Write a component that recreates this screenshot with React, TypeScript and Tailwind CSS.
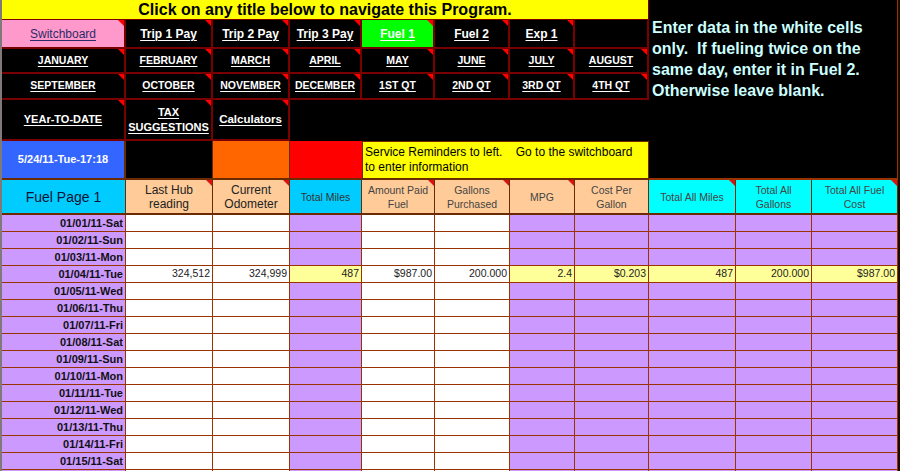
import React from "react";

type NavCell = {
  label: string;
  kind?: "pink" | "green";
  size?: string;
  tri?: boolean;
};

const row2: NavCell[] = [
  { label: "Switchboard", kind: "pink" },
  { label: "Trip 1 Pay" },
  { label: "Trip 2 Pay" },
  { label: "Trip 3 Pay" },
  { label: "Fuel 1", kind: "green" },
  { label: "Fuel 2" },
  { label: "Exp 1" },
  { label: "", tri: false },
];

const row3 = ["JANUARY", "FEBRUARY", "MARCH", "APRIL", "MAY", "JUNE", "JULY", "AUGUST"];
const row4 = ["SEPTEMBER", "OCTOBER", "NOVEMBER", "DECEMBER", "1ST QT", "2ND QT", "3RD QT", "4TH QT"];

type Head = { lines: string[]; bg: string; text: string; tri?: boolean };

const heads: Head[] = [
  { lines: ["Fuel Page 1"], bg: "bg-[#00ccff]", text: "text-[14px] text-[#111133]" },
  { lines: ["Last Hub", "reading"], bg: "bg-[#ffcc99]", text: "text-[12px] text-[#222]", tri: true },
  { lines: ["Current", "Odometer"], bg: "bg-[#ffcc99]", text: "text-[12px] text-[#222]", tri: true },
  { lines: ["Total Miles"], bg: "bg-[#00ccff]", text: "text-[10.5px] text-[#333]" },
  { lines: ["Amount Paid", "Fuel"], bg: "bg-[#ffcc99]", text: "text-[10.5px] text-[#444]", tri: true },
  { lines: ["Gallons", "Purchased"], bg: "bg-[#ffcc99]", text: "text-[10.5px] text-[#444]", tri: true },
  { lines: ["MPG"], bg: "bg-[#ffcc99]", text: "text-[10.5px] text-[#444]", tri: true },
  { lines: ["Cost Per", "Gallon"], bg: "bg-[#ffcc99]", text: "text-[10.5px] text-[#444]" },
  { lines: ["Total All Miles"], bg: "bg-[#00ffff]", text: "text-[10.5px] text-[#444]", tri: true },
  { lines: ["Total All", "Gallons"], bg: "bg-[#00ffff]", text: "text-[10.5px] text-[#444]" },
  { lines: ["Total All Fuel", "Cost"], bg: "bg-[#00ffff]", text: "text-[10.5px] text-[#444]", tri: true },
];

// last entry is only a sliver at the bottom edge, so it carries no label
const days = [
  "01/01/11-Sat",
  "01/02/11-Sun",
  "01/03/11-Mon",
  "01/04/11-Tue",
  "01/05/11-Wed",
  "01/06/11-Thu",
  "01/07/11-Fri",
  "01/08/11-Sat",
  "01/09/11-Sun",
  "01/10/11-Mon",
  "01/11/11-Tue",
  "01/12/11-Wed",
  "01/13/11-Thu",
  "01/14/11-Fri",
  "01/15/11-Sat",
  "",
];

// white = entry column, the rest are formula columns
const entry = [false, true, true, false, true, true, false, false, false, false, false];
const filled = ["", "324,512", "324,999", "487", "$987.00", "200.000", "2.4", "$0.203", "487", "200.000", "$987.00"];

function Tri({ c = "border-t-[#ff0000]" }: { c?: string }) {
  return (
    <span
      className={`absolute right-0 top-0 h-0 w-0 border-l-[6px] border-t-[6px] border-l-transparent ${c}`}
    />
  );
}

function Nav({ cell, size = "text-[12px]" }: { cell: NavCell; size?: string }) {
  const bg =
    cell.kind === "pink" ? "bg-[#ff99cc]" : cell.kind === "green" ? "bg-[#00ff00]" : "bg-black";
  const tone =
    cell.kind === "pink" ? "font-normal text-[#2b2b66]" : "font-bold text-white";
  return (
    <div
      className={`relative flex items-center justify-center border-b-2 border-r-2 border-[#7a0000] ${bg}`}
    >
      {cell.label && (
        <span className={`${size} ${tone} underline decoration-1 underline-offset-[2px]`}>
          {cell.label}
        </span>
      )}
      {cell.tri !== false && <Tri />}
    </div>
  );
}

export default function App() {
  return (
    <div className="flex h-[471px] w-[900px] overflow-hidden bg-black font-['Liberation_Sans',Arial,sans-serif]">
      <div className="w-[2px] shrink-0 bg-[#7f7a78]" />
      <div className="grid grid-cols-[124px_87px_77px_72px_73px_75px_65px_74px_87px_76px_86px] grid-rows-[20px_29px_25px_26px_41px_39px_35px_repeat(16,17px)]">
        {/* title bar */}
        <div className="col-span-8 flex items-center justify-center border-b border-r border-[#7a0000] bg-[#ffff00] text-[16px] font-bold text-black">
          Click on any title below to navigate this Program.
        </div>

        {/* instructions panel */}
        <div className="col-span-3 row-span-6 border-b-2 border-r border-[#993300] bg-black pl-[3px] pt-[17px] text-[16px] font-bold leading-[21px] text-[#ccffff]">
          <div>Enter data in the white cells</div>
          <div className="whitespace-pre">only.  If fueling twice on the</div>
          <div>same day, enter it in Fuel 2.</div>
          <div>Otherwise leave blank.</div>
        </div>

        {row2.map((c, i) => (
          <Nav key={"r2" + i} cell={c} />
        ))}
        {row3.map((m) => (
          <Nav key={m} cell={{ label: m }} size="text-[10.5px]" />
        ))}
        {row4.map((m) => (
          <Nav key={m} cell={{ label: m }} size="text-[10.5px]" />
        ))}

        {/* row 5 */}
        <Nav cell={{ label: "YEAr-TO-DATE" }} size="text-[11px]" />
        <div className="relative flex flex-col items-center justify-center border-b-2 border-r-2 border-[#7a0000] bg-black text-center text-[11px] font-bold leading-[15px] text-white">
          <span className="underline decoration-1 underline-offset-[2px]">TAX</span>
          <span className="underline decoration-1 underline-offset-[2px]">SUGGESTIONS</span>
          <Tri />
        </div>
        <Nav cell={{ label: "Calculators" }} size="text-[11.5px]" />
        <div className="col-span-5 bg-black" />

        {/* row 6 */}
        <div className="flex items-center justify-center border-b-2 border-r-2 border-[#6b2a00] bg-[#3366ff] text-[11px] font-bold text-white">
          5/24/11-Tue-17:18
        </div>
        <div className="border-b-2 border-r border-[#6b2a00] bg-black" />
        <div className="border-b-2 border-r border-[#6b2a00] bg-[#ff6600]" />
        <div className="border-b-2 border-[#6b2a00] bg-[#ff0000]" />
        <div className="col-span-4 flex flex-col justify-center whitespace-pre border-b-2 border-l border-r border-t border-[#6b2a00] bg-[#ffff00] pl-[2px] text-[12px] leading-[15px] text-black">
          <span>{"Service Reminders to left.    Go to the switchboard"}</span>
          <span>to enter information</span>
        </div>

        {/* header row */}
        {heads.map((h, i) => (
          <div
            key={"h" + i}
            className={`relative flex flex-col items-center justify-center border-b-2 border-r border-[#6b2a00] text-center leading-[14px] ${h.bg} ${h.text}`}
          >
            {h.lines.map((l) => (
              <span key={l}>{l}</span>
            ))}
            {h.tri && <Tri c="border-t-[#dd1111]" />}
          </div>
        ))}

        {/* data rows */}
        {days.map((d, r) => (
          <React.Fragment key={"d" + r}>
            <div className="flex items-center justify-end border-b border-r border-[#993300] bg-[#cc99ff] pr-[2px] text-[11px] font-bold text-[#111]">
              {d}
            </div>
            {entry.slice(1).map((isEntry, j) => {
              const col = j + 1;
              const hit = r === 3;
              const bg = isEntry ? "bg-white" : hit ? "bg-[#ffff99]" : "bg-[#cc99ff]";
              return (
                <div
                  key={"c" + r + "-" + col}
                  className={`flex items-center justify-end border-b border-r border-[#993300] pr-[2px] text-[10.5px] text-[#222] ${bg}`}
                >
                  {hit ? filled[col] : ""}
                </div>
              );
            })}
          </React.Fragment>
        ))}
      </div>
      <div className="w-[2px] shrink-0 bg-[#1a0a00]" />
    </div>
  );
}
